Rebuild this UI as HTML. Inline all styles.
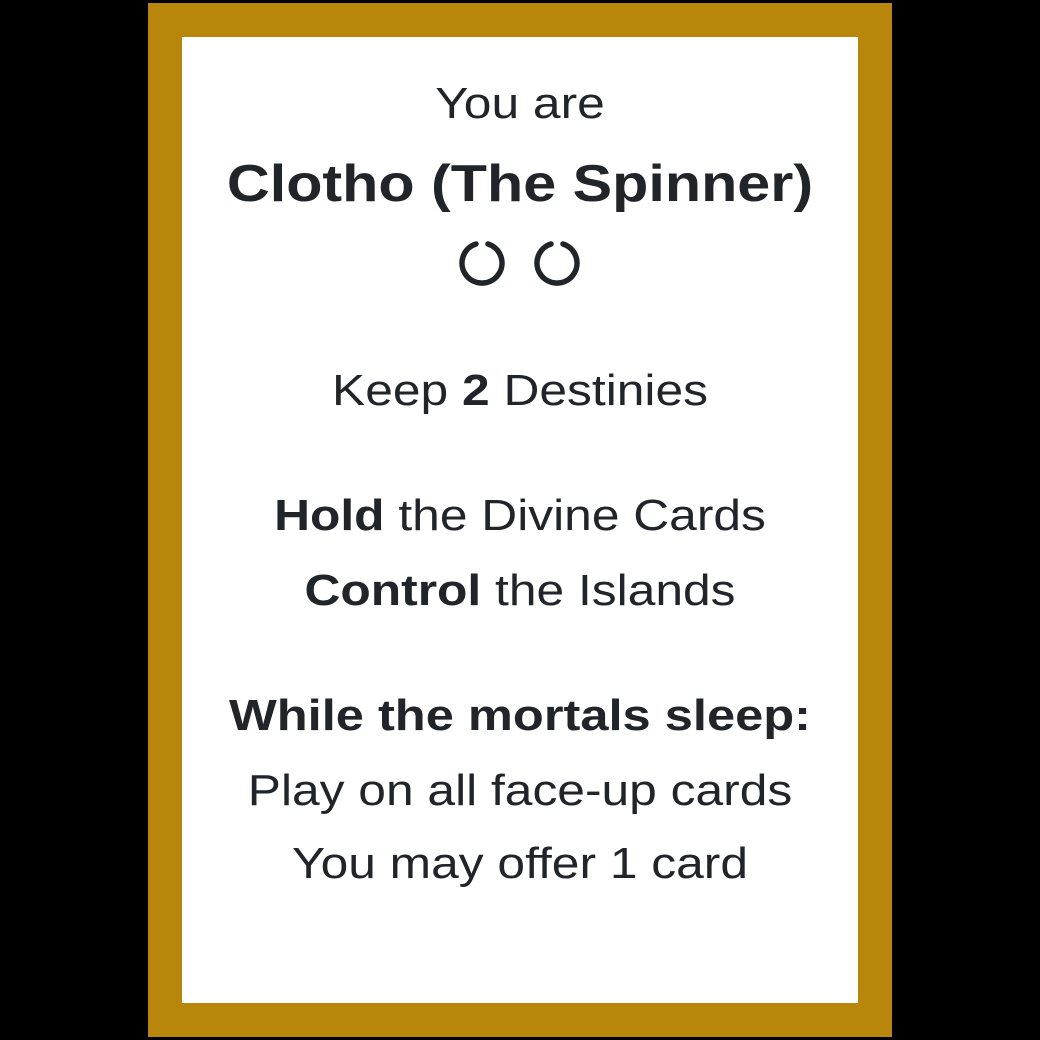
<!DOCTYPE html>
<html><head><style>
html,body{margin:0;padding:0;background:#000;width:1040px;height:1040px;overflow:hidden}
.card{position:absolute;left:148px;top:3px;width:744px;height:1034px;background:#b8860b}
.inner{position:absolute;left:182px;top:37px;width:676px;height:966px;background:#fff}
.l{position:absolute;left:0;width:1040px;text-align:center;font-family:"Liberation Sans",Arial,sans-serif;color:#212529;font-size:44px;line-height:50px;white-space:nowrap;transform:scaleX(1.13);transform-origin:520px 0}
b{font-weight:bold}
.b{transform:scaleX(1.15)}
</style></head><body>
<div class="card"></div><div class="inner"></div>
<div class="l" style="top:79px">You are</div>
<div class="l" style="top:156px;font-size:52px;font-weight:bold;line-height:56px;transform:scaleX(1.14)">Clotho (The Spinner)</div>
<svg style="position:absolute;left:0;top:0" width="1040" height="1040">
<g fill="none" stroke="#212529" stroke-width="5.5" stroke-linecap="round">
<path d="M476 244 A20 20 0 1 0 488 244"/>
<path d="M551 244 A20 20 0 1 0 563 244"/>
</g></svg>
<div class="l" style="top:366px">Keep <b>2</b> Destinies</div>
<div class="l" style="top:491px"><b>Hold</b> the Divine Cards</div>
<div class="l" style="top:566px"><b>Control</b> the Islands</div>
<div class="l b" style="top:691px"><b>While the mortals sleep:</b></div>
<div class="l" style="top:766px">Play on all face-up cards</div>
<div class="l" style="top:839px">You may offer 1 card</div>
</body></html>
